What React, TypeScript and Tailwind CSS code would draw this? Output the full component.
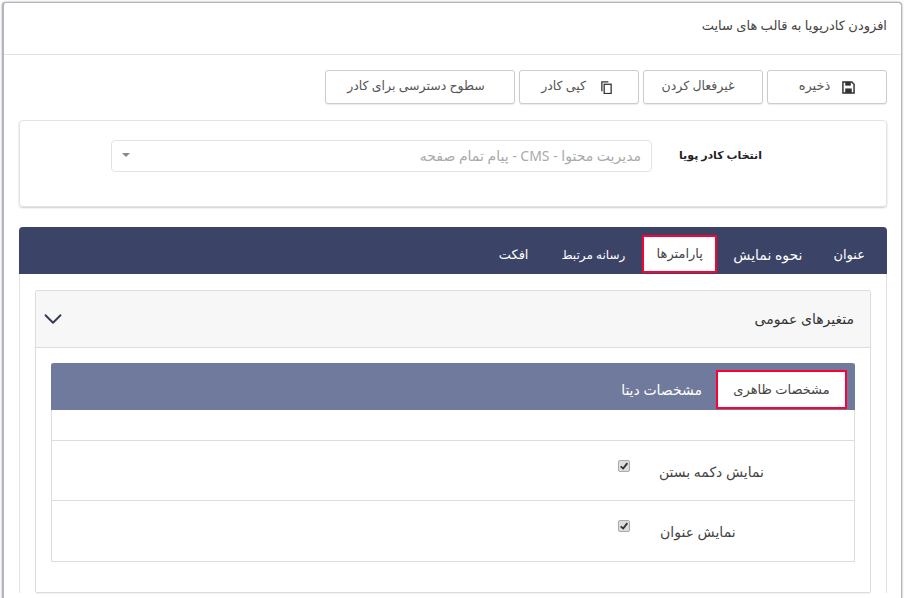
import { ChevronDown } from 'lucide-react';

const font = "font-['Noto_Sans','DejaVu_Sans',sans-serif]";

function SaveIcon() {
  return (
    <svg viewBox="0 0 14 14" className="w-[13px] h-[13px] text-[#333]" fill="none">
      <path d="M1 1h9.5L13 3.5V13H1z" stroke="currentColor" strokeWidth="1.6" />
      <rect x="3.5" y="1" width="6" height="4" fill="currentColor" />
      <rect x="3.5" y="8" width="7" height="5" fill="currentColor" />
    </svg>
  );
}

function CopyIcon() {
  return (
    <svg viewBox="0 0 14 14" className="w-[13px] h-[13px] text-[#333]" fill="none" stroke="currentColor" strokeWidth="1.4">
      <rect x="4.5" y="3.5" width="7.5" height="10" />
      <path d="M2 11V1h7" />
    </svg>
  );
}

function ToolButton({ label, className, icon }: { label: string; className: string; icon?: React.ReactNode }) {
  return (
    <button className={`${className} h-[34px] flex items-center justify-center rounded-[3px] border border-[#ccc] bg-white text-[12.5px] text-[#555] shadow-[0_1px_1px_rgba(0,0,0,0.08)]`}>
      {icon}
      <span className="pb-[2px]">{label}</span>
    </button>
  );
}

function OptionRow({ label, height }: { label: string; height: string }) {
  return (
    <div className={`${height} flex border-t border-[#ddd]`}>
      <div className="w-[194px] pr-[90px] pt-[20px] text-left text-[14px] text-[#444] whitespace-nowrap">{label}</div>
      <div className="pt-[19px] pr-[30px]">
        <div className="w-3 h-3 rounded-[2px] border border-[#aaa] bg-[#ddd] flex items-center justify-center">
          <svg viewBox="0 0 12 12" className="w-[10px] h-[10px]" fill="none" stroke="#333" strokeWidth="2.2">
            <path d="M2 6.5 5 9l5-6.5" />
          </svg>
        </div>
      </div>
    </div>
  );
}

export default function App() {
  return (
    <div dir="rtl" className={`${font} w-[907px] h-[598px] overflow-hidden bg-white pt-[2px] pl-[2px] pr-[5px]`}>
      <div className="h-[640px] rounded-t-[4px] bg-white border-t border-r border-l-2 border-[#b5b5bd] shadow-[0_0_2px_rgba(90,90,100,0.7)]">
        <div className="h-[52px] flex items-center border-b border-[#e3e3e3] pr-[14px] pb-[5px] text-[13px] text-[#444]">
          افزودن کادرپویا به قالب های سایت
        </div>

        <div className="pr-[14px] pl-[15px] pt-[15px]">
          <div className="flex gap-1">
            <ToolButton label="ذخیره" className="w-[120px] gap-3 text-[13px]" icon={<SaveIcon />} />
            <ToolButton label="غیرفعال کردن" className="w-[120px] pr-[10px]" />
            <ToolButton label="کپی کادر" className="w-[120px] gap-[14px] pr-[4px]" icon={<CopyIcon />} />
            <ToolButton label="سطوح دسترسی برای کادر" className="w-[190px] pr-[8px]" />
          </div>

          <div className="mt-[16px] h-[87px] rounded-[4px] border border-[#e3e3e3] shadow-[0_1px_2px_rgba(0,0,0,0.2)] flex pt-[19px]">
            <div className="w-[234px] pr-[124px] pt-[7px] text-[11px] font-bold text-[#222] whitespace-nowrap">انتخاب کادر پویا</div>
            <div className="w-[541px] h-[32px] rounded-[4px] border border-[#e3e3e3] flex items-center justify-between px-[10px] pb-[2px] text-[14px] text-[#aaa]">
              <span>مدیریت محتوا - CMS - پیام تمام صفحه</span>
              <span className="w-0 h-0 border-x-[4px] border-x-transparent border-t-[4px] border-t-[#888]" />
            </div>
          </div>

          <div className="mt-[20px] rounded-t-[4px] border-x border-[#e3e3e3]">
            <div className="-mx-px h-[47px] rounded-t-[4px] bg-[#3b4366] flex items-end pr-[7px] text-[13px] font-medium text-white">
              <div className="h-[37px] mb-px px-[15px] flex items-center">عنوان</div>
              <div className="h-[37px] mb-px px-[16px] flex items-center text-[14px]">نحوه نمایش</div>
              <div className="h-[38px] mb-px w-[75px] flex items-center justify-center bg-white border-2 border-[#ff0033] text-[#444] font-normal">پارامترها</div>
              <div className="h-[37px] mb-px px-[17px] flex items-center text-[12px]">رسانه مرتبط</div>
              <div className="h-[37px] mb-px px-[16px] flex items-center">افکت</div>
            </div>

            <div className="px-[15px] pt-[16px]">
              <div className="h-[303px] rounded-[2px] border border-[#ddd] shadow-[0_1px_1px_rgba(0,0,0,0.06)]">
                <div className="h-[57px] bg-[#f7f7f7] border-b border-[#ddd] flex items-center justify-between pr-[16px] pl-[2px] pb-[2px] text-[14px] font-medium text-[#333]">
                  <span>متغیرهای عمومی</span>
                  <ChevronDown className="w-[30px] h-[30px] mt-[2px] text-[#333a55]" strokeWidth={1.5} />
                </div>

                <div className="px-[15px] pt-[15px]">
                  <div className="border-x border-b border-[#ddd]">
                    <div className="-mx-px h-[47px] rounded-t-[3px] bg-[#6f7a9c] flex items-end pr-[8px] text-[13px]">
                      <div className="h-[39px] mb-px w-[131px] flex items-center justify-center bg-white border-2 border-[#ff0033] text-[#444]">مشخصات ظاهری</div>
                      <div className="h-[39px] mb-px px-[14px] flex items-center text-[14px] text-white">مشخصات دیتا</div>
                    </div>
                    <div className="h-[30px]" />
                    <OptionRow label="نمایش دکمه بستن" height="h-[60px]" />
                    <OptionRow label="نمایش عنوان" height="h-[61px]" />
                  </div>
                </div>
              </div>
            </div>
          </div>
        </div>
      </div>
    </div>
  );
}
